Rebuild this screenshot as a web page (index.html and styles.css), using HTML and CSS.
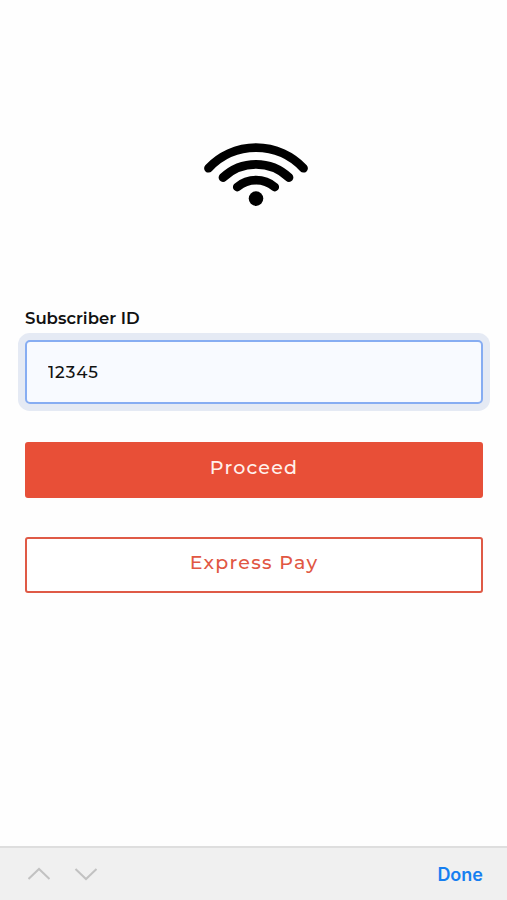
FILE: index.html
```html
<!DOCTYPE html>
<html lang="en">
<head>
<meta charset="utf-8">
<meta name="viewport" content="width=device-width, initial-scale=1">
<title>Subscriber Login</title>
<link rel="stylesheet" href="styles.css">
</head>
<body>
<main class="content">
  <svg class="logo" viewBox="0 0 106 66" aria-hidden="true">
    <g fill="none" stroke="#000" stroke-width="8.8" stroke-linecap="round">
      <path d="M5.5 26.2A65.2 65.2 0 0 1 100.5 26.2"/>
      <path d="M20 35.5A48 48 0 0 1 86 35.5"/>
      <path d="M34.3 45A29 29 0 0 1 71.7 45"/>
    </g>
    <circle cx="53" cy="56.6" r="7.3"/>
  </svg>
  <label class="label" for="subscriber">Subscriber ID</label>
  <input class="field" id="subscriber" type="text" value="12345">
  <button class="button primary" type="button"><span class="caption-primary">Proceed</span></button>
  <button class="button outline" type="button"><span class="caption-outline">Express Pay</span></button>
</main>
<footer class="toolbar">
  <svg class="arrows" viewBox="0 0 70 16" aria-hidden="true">
    <path d="M0.5 13L11 3L21.5 13M47.5 3L58 13L68.5 3" fill="none" stroke="#c2c2c2" stroke-width="2"/>
  </svg>
  <span class="done">Done</span>
</footer>
</body>
</html>
```

FILE: styles.css
```css
* {
  box-sizing: border-box;
}

body {
  display: flex;
  flex-direction: column;
  height: 900px;
  margin: 0;
  overflow: hidden;
  background: #fefefe;
  font-family: Montserrat, Inter, sans-serif;
}

.content {
  display: flex;
  flex: 1;
  flex-direction: column;
  padding: 142px 24px 0 25px;
}

.logo {
  width: 106px;
  height: 66px;
  margin-left: 178px;
}

.label {
  margin-top: 100px;
  color: #111;
  font-size: 16.5px;
  font-weight: 600;
  line-height: 20px;
  letter-spacing: 0;
}

.field {
  width: 458px;
  height: 64px;
  margin-top: 12px;
  padding: 0 21px 1px;
  border: 2px solid #87adf2;
  border-radius: 5px;
  outline: none;
  background: #f8faff;
  box-shadow: 0 0 0 7px #e5eaf4;
  color: #111;
  font: 500 16.8px/20px Montserrat, Inter, sans-serif;
  letter-spacing: 0.9px;
}

.button {
  width: 458px;
  height: 56px;
  padding: 0 0 4px;
  border: 2px solid #e65039;
  border-radius: 3px;
  font: 500 19px/24px Montserrat, Inter, sans-serif;
}

.primary {
  margin-top: 38px;
  background: #e84f37;
  color: #fff1ec;
}

.outline {
  margin-top: 39px;
  border-color: #df5a46;
  background: #fff;
  color: #e15743;
}

.caption-primary {
  letter-spacing: 1.2px;
}

.caption-outline {
  letter-spacing: 1.3px;
}

.toolbar {
  display: flex;
  align-items: center;
  justify-content: space-between;
  height: 54px;
  padding: 1px 24px 0 28px;
  border-top: 2px solid #dedede;
  background: #f0f0f0;
}

.arrows {
  width: 70px;
  height: 16px;
  margin-bottom: 2px;
}

.done {
  color: #167ff0;
  font: 600 18px/22px Inter, sans-serif;
}
```
